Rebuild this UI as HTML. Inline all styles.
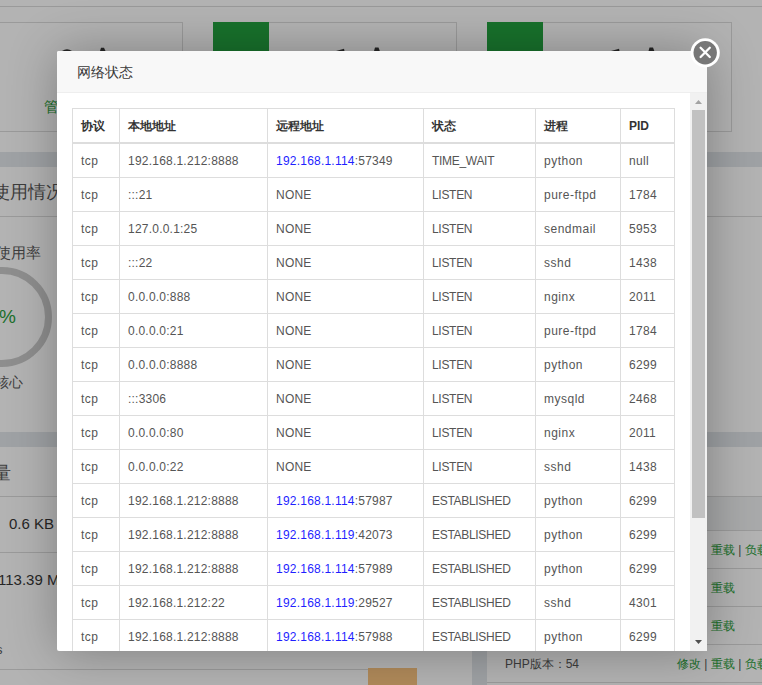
<!DOCTYPE html>
<html><head><meta charset="utf-8">
<style>
html,body{margin:0;padding:0;}
body{width:762px;height:685px;overflow:hidden;position:relative;background:#b3b3b3;font-family:"Liberation Sans",sans-serif;}
.abs{position:absolute;}
.hl{position:absolute;height:1px;background:#9a9a9a;}
.vl{position:absolute;width:1px;background:#9a9a9a;}
.band{position:absolute;background:#9fa2a5;}
.bgtxt{position:absolute;color:#3d3d3d;white-space:nowrap;line-height:1;}
.grn{color:#1b6f2b;}
/* modal */
#modal{position:absolute;left:57px;top:51px;width:650px;height:600px;background:#fff;border-radius:2px;box-shadow:1px 1px 50px rgba(0,0,0,.3);}
#title{position:absolute;left:0;top:0;width:650px;height:41px;background:#f8f8f8;border-bottom:1px solid #eee;border-radius:2px 2px 0 0;}
#title span{position:absolute;left:20px;top:1px;line-height:41px;font-size:14px;color:#3a3a3a;}
#content{position:absolute;left:0;top:42px;width:650px;height:558px;overflow:hidden;}
table{position:absolute;left:15px;top:15px;border-collapse:collapse;table-layout:fixed;width:602px;font-size:12px;color:#555;}
td,th{border:1px solid #ddd;padding:9px 8px 7px;line-height:17px;text-align:left;white-space:nowrap;overflow:hidden;}
th{border-bottom-width:2px;font-weight:bold;color:#333;}
a{color:#1f1fff;text-decoration:none;}
td:nth-child(2),td:nth-child(3){letter-spacing:0.22px;}
td:nth-child(4){letter-spacing:-0.3px;}
td:nth-child(1),td:nth-child(5){letter-spacing:0.5px;}
td:nth-child(6){letter-spacing:0.3px;}
#sb{position:absolute;left:633px;top:42px;width:17px;height:558px;background:#f1f1f1;}
#thumb{position:absolute;left:2px;top:17px;width:13px;height:408px;background:#c1c1c1;}
#close{position:absolute;left:690px;top:38px;width:30px;height:30px;}
</style></head><body>

<!-- background page -->
<div class="hl" style="left:0;top:6px;width:762px;"></div>
<!-- top boxes -->
<div class="abs" style="left:-31px;top:22px;width:212px;height:108px;border:1px solid #9a9a9a;"></div>
<div class="abs" style="left:213px;top:22px;width:242px;height:108px;border:1px solid #9a9a9a;"></div>
<div class="abs" style="left:487px;top:22px;width:243px;height:108px;border:1px solid #9a9a9a;"></div>
<div class="abs" style="left:213px;top:22px;width:56px;height:30px;background:#18722c;"></div>
<div class="abs" style="left:487px;top:22px;width:56px;height:30px;background:#18722c;"></div>

<svg class="abs" style="left:0;top:40px" width="762" height="12">
<path d="M62 11 Q67 7.5 72 11 Z" fill="#262626"/><path d="M100 11 L101 7.8 L104 7.8 L105.5 11 Z" fill="#262626"/>
<path d="M336 11 Q341 9.5 344 8.8 L344.5 11 Z" fill="#262626"/><path d="M374 11 L375 7.6 L378.5 7.6 L379.8 11 Z" fill="#262626"/>
<path d="M611 11 Q616 9.5 619 8.8 L619.5 11 Z" fill="#262626"/><path d="M648.5 11 L649.5 7.6 L653 7.6 L654.3 11 Z" fill="#262626"/>
</svg>
<!-- bands -->
<div class="band" style="left:0;top:152px;width:762px;height:15px;"></div>
<div class="band" style="left:0;top:432px;width:762px;height:15px;"></div>
<div class="band" style="left:472px;top:651px;width:15px;height:34px;"></div>
<div class="hl" style="left:0;top:216px;width:762px;"></div>
<div class="hl" style="left:0;top:496px;width:762px;"></div>
<div class="hl" style="left:0;top:552px;width:60px;"></div>
<div class="hl" style="left:0;top:669px;width:368px;"></div>
<div class="abs" style="left:368px;top:668px;width:49px;height:17px;background:#b08a5a;"></div>
<div class="abs" style="left:707px;top:497px;width:55px;height:33px;background:#a9aaab;"></div>
<div class="hl" style="left:700px;top:530px;width:62px;"></div>
<div class="hl" style="left:700px;top:568px;width:62px;"></div>
<div class="hl" style="left:700px;top:606px;width:62px;"></div>
<div class="hl" style="left:487px;top:644px;width:275px;"></div>
<div class="hl" style="left:487px;top:682px;width:275px;"></div>

<div class="bgtxt" style="left:-8px;top:183px;font-size:18px;">使用情况</div>
<div class="bgtxt" style="left:-4px;top:245px;font-size:15px;">使用率</div>
<div class="abs" style="left:-48px;top:267px;width:86px;height:86px;border:7px solid #8e8e8e;border-radius:50%;"></div>
<div class="bgtxt grn" style="left:-1px;top:307px;font-size:19px;">%</div>
<div class="bgtxt" style="left:-5px;top:375px;font-size:14px;">核心</div>
<div class="bgtxt" style="left:-7px;top:464px;font-size:18px;">量</div>
<div class="bgtxt" style="left:9px;top:516px;font-size:15px;color:#262626;">0.6 KB</div>
<div class="bgtxt" style="left:-2px;top:572px;font-size:15px;color:#262626;">113.39 M</div>
<div class="bgtxt" style="left:-4px;top:643px;font-size:13px;">s</div>
<div class="bgtxt grn" style="left:44px;top:99px;font-size:15px;">管</div>

<div class="bgtxt grn" style="left:711px;top:544px;font-size:12px;">重载 <span style="color:#3d3d3d">|</span> 负载</div>
<div class="bgtxt grn" style="left:711px;top:582px;font-size:12px;">重载</div>
<div class="bgtxt grn" style="left:711px;top:620px;font-size:12px;">重载</div>
<div class="bgtxt grn" style="left:677px;top:658px;font-size:12px;">修改 <span style="color:#3d3d3d">|</span> 重载 <span style="color:#3d3d3d">|</span> 负载</div>
<div class="bgtxt" style="left:505px;top:658px;font-size:12px;">PHP版本：54</div>

<!-- modal -->
<div id="modal">
  <div id="title"><span>网络状态</span></div>
  <div id="content">
    <table>
      <colgroup><col style="width:47px"><col style="width:148px"><col style="width:156px"><col style="width:112px"><col style="width:85px"><col style="width:54px"></colgroup>
      <tr><th>协议</th><th>本地地址</th><th>远程地址</th><th>状态</th><th>进程</th><th>PID</th></tr>
      <tr><td>tcp</td><td>192.168.1.212:8888</td><td><a>192.168.1.114</a>:57349</td><td>TIME_WAIT</td><td>python</td><td>null</td></tr>
      <tr><td>tcp</td><td>:::21</td><td>NONE</td><td>LISTEN</td><td>pure-ftpd</td><td>1784</td></tr>
      <tr><td>tcp</td><td>127.0.0.1:25</td><td>NONE</td><td>LISTEN</td><td>sendmail</td><td>5953</td></tr>
      <tr><td>tcp</td><td>:::22</td><td>NONE</td><td>LISTEN</td><td>sshd</td><td>1438</td></tr>
      <tr><td>tcp</td><td>0.0.0.0:888</td><td>NONE</td><td>LISTEN</td><td>nginx</td><td>2011</td></tr>
      <tr><td>tcp</td><td>0.0.0.0:21</td><td>NONE</td><td>LISTEN</td><td>pure-ftpd</td><td>1784</td></tr>
      <tr><td>tcp</td><td>0.0.0.0:8888</td><td>NONE</td><td>LISTEN</td><td>python</td><td>6299</td></tr>
      <tr><td>tcp</td><td>:::3306</td><td>NONE</td><td>LISTEN</td><td>mysqld</td><td>2468</td></tr>
      <tr><td>tcp</td><td>0.0.0.0:80</td><td>NONE</td><td>LISTEN</td><td>nginx</td><td>2011</td></tr>
      <tr><td>tcp</td><td>0.0.0.0:22</td><td>NONE</td><td>LISTEN</td><td>sshd</td><td>1438</td></tr>
      <tr><td>tcp</td><td>192.168.1.212:8888</td><td><a>192.168.1.114</a>:57987</td><td>ESTABLISHED</td><td>python</td><td>6299</td></tr>
      <tr><td>tcp</td><td>192.168.1.212:8888</td><td><a>192.168.1.119</a>:42073</td><td>ESTABLISHED</td><td>python</td><td>6299</td></tr>
      <tr><td>tcp</td><td>192.168.1.212:8888</td><td><a>192.168.1.114</a>:57989</td><td>ESTABLISHED</td><td>python</td><td>6299</td></tr>
      <tr><td>tcp</td><td>192.168.1.212:22</td><td><a>192.168.1.119</a>:29527</td><td>ESTABLISHED</td><td>sshd</td><td>4301</td></tr>
      <tr><td>tcp</td><td>192.168.1.212:8888</td><td><a>192.168.1.114</a>:57988</td><td>ESTABLISHED</td><td>python</td><td>6299</td></tr>
      <tr><td>tcp</td><td>192.168.1.212:8888</td><td><a>192.168.1.114</a>:57990</td><td>ESTABLISHED</td><td>python</td><td>6299</td></tr>
    </table>
  </div>
  <div id="sb">
    <svg style="position:absolute;left:0;top:0" width="17" height="17"><path d="M5 11 L12 11 L8.5 7 Z" fill="#a3a3a3"/></svg>
    <div id="thumb"></div>
    <svg style="position:absolute;left:0;top:541px" width="17" height="17"><path d="M5 6 L12 6 L8.5 10 Z" fill="#505050"/></svg>
  </div>
</div>
<div id="close">
  <svg width="30" height="30" viewBox="0 0 30 30"><circle cx="15.2" cy="14.8" r="14.6" fill="#fff"/><circle cx="15.2" cy="14.8" r="11.7" fill="#777"/><path d="M10.6 9.8 L19.8 19 M19.8 9.8 L10.6 19" stroke="#fff" stroke-width="2.3" stroke-linecap="round"/></svg>
</div>
</body></html>
